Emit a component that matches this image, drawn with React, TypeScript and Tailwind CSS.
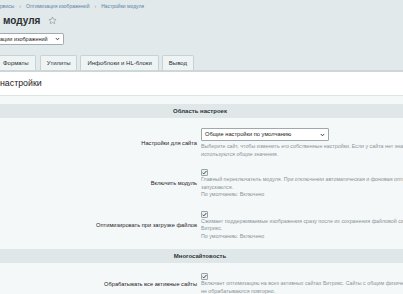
import React from 'react';

const Check = () => (
  <svg width="7" height="7" viewBox="0 0 7 7" className="block">
    <rect x="0.5" y="0.5" width="6" height="6" rx="0.5" fill="#eef1f2" stroke="#9aa4a8" />
    <path d="M1.6 3.7 L2.8 4.9 L5.4 2" fill="none" stroke="#3f474b" strokeWidth="1" />
  </svg>
);

const Chevron = () => (
  <svg width="5" height="4" viewBox="0 0 5 4" className="block">
    <path d="M0.8 1 L2.5 2.8 L4.2 1" fill="none" stroke="#333" strokeWidth="0.9" />
  </svg>
);

const Star = () => (
  <svg width="9" height="9" viewBox="0 0 24 24" className="block">
    <path
      d="M12 2.5l2.9 6.1 6.6.8-4.9 4.6 1.3 6.6L12 17.3l-5.9 3.3 1.3-6.6-4.9-4.6 6.6-.8z"
      fill="none"
      stroke="#98a3a8"
      strokeWidth="2"
      strokeLinejoin="round"
    />
  </svg>
);

const Band = ({ title }: { title: string }) => (
  <div className="h-[14px] bg-[#e0e7e9] flex items-center justify-center pr-[3px] text-[6px] font-bold text-[#2f3335]">
    {title}
  </div>
);

const Hint = ({ lines }: { lines: string[] }) => (
  <div className="text-[5.3px] leading-[7.5px] text-[#8a9397]">
    {lines.map((l) => (
      <div key={l} className="whitespace-nowrap">{l}</div>
    ))}
  </div>
);

const Row = ({ label, children }: { label: string; children: React.ReactNode }) => (
  <div className="flex items-center py-[5px]">
    <div className="w-[201px] shrink-0 pr-[4px] text-right text-[5.7px] text-[#1e2224] whitespace-nowrap">
      {label}
    </div>
    <div className="flex-1 min-w-0">{children}</div>
  </div>
);

export default function App() {
  const tabs = ['Форматы', 'Утилиты', 'Инфоблоки и HL-блоки', 'Вывод'];

  return (
    <div className="w-[403px] h-[294px] overflow-hidden bg-[#f5f8f9]" style={{ fontFamily: '"Liberation Sans", Arial, sans-serif' }}>
      {/* header */}
      <div className="bg-[#e1e9eb]">
        <div className="h-[14px] flex items-center gap-[5px] text-[5px] text-[#5f83a3] whitespace-nowrap">
          <span>рвисы</span>
          <span className="text-[#8aa0b2]">›</span>
          <span>Оптимизация изображений</span>
          <span className="text-[#8aa0b2]">›</span>
          <span>Настройки модуля</span>
        </div>
        <div className="h-[12px] flex items-center gap-[8px] pl-[3px]">
          <span className="text-[10px] font-bold text-[#2b2f31]">модуля</span>
          <Star />
        </div>
        <div className="mt-[7px] h-[12px] w-[64px] bg-white border border-[#a3adb1] rounded-r-[2px] border-l-0 flex items-center justify-between pr-[3px] text-[5.5px] text-[#222] whitespace-nowrap">
          <span>ации изображений</span>
          <Chevron />
        </div>
        <div className="mt-[10px] flex items-end gap-[3px] border-b-2 border-[#cdd6d9]">
          {tabs.map((t, i) => (
            <div
              key={t}
              className={`h-[15px] flex items-center bg-[#eef3f4] border border-b-0 border-[#c8d2d5] rounded-t-[2px] text-[6px] text-[#2b2f31] whitespace-nowrap ${
                i === 0 ? 'pl-[3px] pr-[6px] border-l-0 rounded-tl-none mr-[1px]' : 'px-[6px]'
              }`}
            >
              {t}
            </div>
          ))}
        </div>
      </div>

      {/* panel title */}
      <div className="h-[24px] bg-white border-b border-[#dce3e5] flex items-center text-[8.8px] text-[#1e2224]">
        настройки
      </div>

      {/* form */}
      <div className="pt-[8px]">
        <Band title="Область настроек" />
        <div className="pt-[5px]">
          <Row label="Настройки для сайта">
            <div className="h-[13px] w-[128px] bg-white border border-[#9ea8ad] rounded-[1px] flex items-center justify-between px-[3px] text-[5.7px] text-[#1e2224]">
              <span>Общие настройки по умолчанию</span>
              <Chevron />
            </div>
            <div className="mt-[1px] text-[5.3px] leading-[8px] text-[#8a9397]">
              <div className="whitespace-nowrap">Выберите сайт, чтобы изменить его собственные настройки. Если у сайта нет значений,</div>
              <div className="whitespace-nowrap">используются общие значения.</div>
            </div>
          </Row>
          <div className="h-[1px]" />
          <Row label="Включить модуль">
            <Check />
            <Hint
              lines={[
                'Главный переключатель модуля. При отключении автоматическая и фоновая оптимизация не',
                'запускаются.',
                'По умолчанию: Включено',
              ]}
            />
          </Row>
          <div className="h-[2px]" />
          <Row label="Оптимизировать при загрузке файлов">
            <Check />
            <Hint
              lines={[
                'Сжимает поддерживаемые изображения сразу после их сохранения файловой системой',
                'Битрикс.',
                'По умолчанию: Включено',
              ]}
            />
          </Row>
        </div>
        <div className="mt-[4px]">
          <Band title="Многосайтовость" />
        </div>
        <div className="pt-[5px]">
          <Row label="Обрабатывать все активные сайты">
            <Check />
            <Hint
              lines={[
                'Включает оптимизацию на всех активных сайтах Битрикс. Сайты с общим физическим путём',
                'не обрабатываются повторно.',
              ]}
            />
          </Row>
        </div>
      </div>
    </div>
  );
}
